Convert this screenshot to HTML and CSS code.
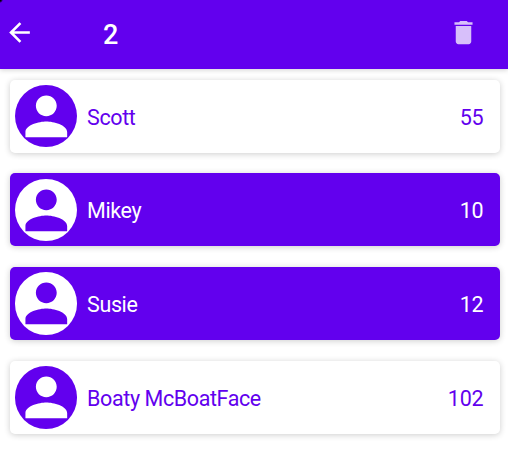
FILE: index.html
```html
<!DOCTYPE html>
<html lang="en">
<head>
<meta charset="utf-8">
<title>Contacts</title>
<link rel="stylesheet" href="styles.css">
</head>
<body>
<svg class="defs" width="0" height="0"><symbol id="person" viewBox="0 0 24 24"><path d="M12 12c2.21 0 4-1.79 4-4s-1.79-4-4-4-4 1.79-4 4 1.79 4 4 4zm0 2c-2.67 0-8 1.340-8 4v2h16v-2c0-2.660-5.330-4-8-4z"/></symbol></svg>
<header class="bar">
  <svg class="back" viewBox="0 0 24 24"><path d="M20 11H7.830l5.590-5.590L12 4l-8 8 8 8 1.410-1.410L7.830 13H20v-2z"/></svg>
  <h1 class="count">2</h1>
  <svg class="trash" viewBox="0 0 24 24"><path d="M6 19c0 1.100.9 2 2 2h8c1.100 0 2-.9 2-2V7H6v12zM19 4h-3.500l-1-1h-5l-1 1H5v2h14V4z"/></svg>
</header>
<main class="list">
  <div class="card"><span class="avatar"><svg><use href="#person"/></svg></span><span class="name">Scott</span><span class="value">55</span></div>
  <div class="card selected"><span class="avatar"><svg><use href="#person"/></svg></span><span class="name">Mikey</span><span class="value">10</span></div>
  <div class="card selected"><span class="avatar"><svg><use href="#person"/></svg></span><span class="name">Susie</span><span class="value">12</span></div>
  <div class="card"><span class="avatar"><svg><use href="#person"/></svg></span><span class="name">Boaty McBoatFace</span><span class="value">102</span></div>
</main>
</body>
</html>
```
FILE: styles.css
```css
* { box-sizing: border-box; }
body { margin: 0; min-height: 100vh; background: #fff; font-family: Roboto, sans-serif; }
.defs { display: block; }
.bar { height: 69px; background: radial-gradient(circle at 0 0, #000 1px, #6200ee 3px); color: #fff; display: flex; align-items: center; padding: 0 29.500px 4px 4px; box-shadow: 0 1px 5px rgba(0,0,0,.18); }
.bar svg { fill: #fff; flex: none; }
.back { width: 31px; height: 31px; }
.count { margin: 4px 0 0 68px; font-size: 27px; font-weight: 500; line-height: 30px; flex: 1; }
.trash { width: 31px; height: 31px; opacity: .75; }
.list { display: flex; flex-direction: column; gap: 20.750px; padding: 10.600px 8.500px 8px 9.500px; }
.card { height: 73px; border-radius: 5px; background: #fff; color: #6200ee; display: flex; align-items: center; padding: 0 16px 0 5px; font-size: 21.500px; box-shadow: 0 1px 6px rgba(0,0,0,.2); }
.avatar { width: 62.600px; height: 62.600px; border-radius: 50%; background: #6200ee; display: flex; align-items: center; justify-content: center; }
.avatar svg { width: 62.600px; height: 62.600px; fill: #fff; }
.name { flex: 1; margin-left: 10px; letter-spacing: -.4px; }
.name, .value { padding-top: 2px; }
.value { letter-spacing: -.2px; }
.selected { background: #6200ee; color: #fff; }
.selected .avatar { background: #fff; }
.selected .avatar svg { fill: #6200ee; }
```
